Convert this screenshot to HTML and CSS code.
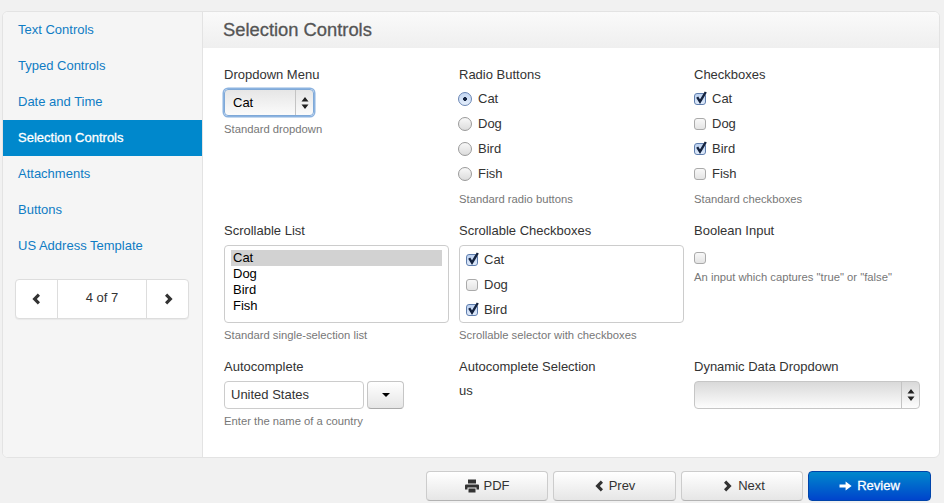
FILE: index.html
```html
<!DOCTYPE html>
<html lang="en">
<head>
    <meta charset="UTF-8">
    <title>Selection Controls</title>
    <link rel="stylesheet" href="styles.css">
</head>
<body>
    <svg class="defs" width="0" height="0">
        <symbol id="tick" viewBox="0 0 14 14">
            <path d="M3.2 6.2 L6 10.6 L11.8 1" fill="none" stroke="#14233f" stroke-width="2.4"/>
        </symbol>
        <symbol id="updown" viewBox="0 0 8 14">
            <path d="M4 1 L7.5 5.6 H0.5 Z M4 13 L0.5 8.4 H7.5 Z" fill="#222"/>
        </symbol>
        <symbol id="left" viewBox="0 0 10 12">
            <path d="M6.8 0.6 L9 2.8 L5.8 6 L9 9.2 L6.8 11.4 L1.4 6 Z" fill="#333"/>
        </symbol>
        <symbol id="right" viewBox="0 0 10 12">
            <path d="M3.2 0.6 L1 2.8 L4.2 6 L1 9.2 L3.2 11.4 L8.6 6 Z" fill="#333"/>
        </symbol>
    </svg>

    <div class="panel">
        <ul class="sidenav">
            <li><a href="#">Text Controls</a></li>
            <li><a href="#">Typed Controls</a></li>
            <li><a href="#">Date and Time</a></li>
            <li class="active"><a href="#">Selection Controls</a></li>
            <li><a href="#">Attachments</a></li>
            <li><a href="#">Buttons</a></li>
            <li><a href="#">US Address Template</a></li>
            <li class="pager-row">
                <div class="pager">
                    <a href="#" class="pager-arrow arrow-prev"><svg width="10" height="12"><use href="#left"/></svg></a>
                    <span class="pager-count">4 of 7</span>
                    <a href="#" class="pager-arrow arrow-next"><svg width="10" height="12"><use href="#right"/></svg></a>
                </div>
            </li>
        </ul>

        <div class="main">
            <h2 class="main-title">Selection Controls</h2>
            <div class="fields">

                <div class="field">
                    <div class="field-label">Dropdown Menu</div>
                    <div class="select select-focus">
                        <span class="select-value">Cat</span>
                        <span class="select-btn"><svg width="8" height="14"><use href="#updown"/></svg></span>
                    </div>
                    <div class="help">Standard dropdown</div>
                </div>

                <div class="field">
                    <div class="field-label">Radio Buttons</div>
                    <div class="opt"><span class="radio on"></span>Cat</div>
                    <div class="opt"><span class="radio"></span>Dog</div>
                    <div class="opt"><span class="radio"></span>Bird</div>
                    <div class="opt"><span class="radio"></span>Fish</div>
                    <div class="help help-opts">Standard radio buttons</div>
                </div>

                <div class="field">
                    <div class="field-label">Checkboxes</div>
                    <div class="opt"><span class="check on"><svg width="14" height="14"><use href="#tick"/></svg></span>Cat</div>
                    <div class="opt"><span class="check"></span>Dog</div>
                    <div class="opt"><span class="check on"><svg width="14" height="14"><use href="#tick"/></svg></span>Bird</div>
                    <div class="opt"><span class="check"></span>Fish</div>
                    <div class="help help-opts">Standard checkboxes</div>
                </div>

                <div class="field">
                    <div class="field-label">Scrollable List</div>
                    <div class="listbox">
                        <div class="list-item selected">Cat</div>
                        <div class="list-item">Dog</div>
                        <div class="list-item">Bird</div>
                        <div class="list-item">Fish</div>
                    </div>
                    <div class="help">Standard single-selection list</div>
                </div>

                <div class="field">
                    <div class="field-label">Scrollable Checkboxes</div>
                    <div class="listbox listbox-checks">
                        <div class="opt"><span class="check on"><svg width="14" height="14"><use href="#tick"/></svg></span>Cat</div>
                        <div class="opt"><span class="check"></span>Dog</div>
                        <div class="opt"><span class="check on"><svg width="14" height="14"><use href="#tick"/></svg></span>Bird</div>
                    </div>
                    <div class="help">Scrollable selector with checkboxes</div>
                </div>

                <div class="field">
                    <div class="field-label">Boolean Input</div>
                    <div class="bool"><span class="check"></span></div>
                    <div class="help help-bool">An input which captures "true" or "false"</div>
                </div>

                <div class="field">
                    <div class="field-label">Autocomplete</div>
                    <div class="combo">
                        <div class="text-input">United States</div>
                        <div class="combo-btn"><span class="caret"></span></div>
                    </div>
                    <div class="help">Enter the name of a country</div>
                </div>

                <div class="field">
                    <div class="field-label">Autocomplete Selection</div>
                    <div class="static-value">us</div>
                </div>

                <div class="field">
                    <div class="field-label">Dynamic Data Dropdown</div>
                    <div class="select select-wide">
                        <span class="select-value"></span>
                        <span class="select-btn"><svg width="8" height="14"><use href="#updown"/></svg></span>
                    </div>
                </div>

            </div>
        </div>
    </div>

    <div class="actions">
        <a href="#" class="btn">
            <svg width="14" height="14" viewBox="0 0 14 14"><path d="M3 0.5 H11 V4.5 H3 Z M1 5.5 H13 Q14 5.5 14 6.5 V10.5 H11.5 V8.5 H2.5 V10.5 H0 V6.5 Q0 5.5 1 5.5 Z M3.5 9.5 H10.5 V13.5 H3.5 Z" fill="#333"/></svg>
            PDF
        </a>
        <a href="#" class="btn btn-wide"><svg width="10" height="12"><use href="#left"/></svg> Prev</a>
        <a href="#" class="btn btn-next"><svg width="10" height="12"><use href="#right"/></svg> Next</a>
        <a href="#" class="btn btn-wide btn-primary">
            <svg width="13" height="12" viewBox="0 0 13 12"><path d="M0.5 4.6 H6.6 V1.6 L12.6 6 L6.6 10.4 V7.4 H0.5 Z" fill="#fff"/></svg>
            Review
        </a>
    </div>
</body>
</html>
```

FILE: styles.css
```css
* {
    box-sizing: border-box;
}
html, body {
    height: 100%;
}
body {
    margin: 0;
    padding: 11px 4px 0 2px;
    background-color: #f1f1f1;
    font-family: "Liberation Sans", Arial, sans-serif;
    font-size: 13px;
    line-height: 20px;
    color: #333;
    overflow: hidden;
}
a {
    text-decoration: none;
}
.defs {
    position: absolute;
}

/* outer panel */
.panel {
    display: flex;
    height: 447px;
    background-color: #fff;
    border: 1px solid #e3e3e3;
    border-radius: 6px;
    overflow: hidden;
}

/* left nav */
.sidenav {
    width: 200px;
    flex: none;
    margin: 0;
    padding: 0;
    list-style: none;
    background-color: #f5f5f5;
    border-right: 1px solid #e3e3e3;
}
.sidenav li a {
    display: block;
    height: 36px;
    padding: 8px 15px 6px;
    color: #0f7cc4;
}
.sidenav li.active a {
    background-color: #0088cc;
    color: #fff;
    -webkit-text-stroke: 0.3px #fff;
}
.sidenav li.pager-row {
    padding: 15px 12px 0;
}
.pager {
    display: flex;
    width: 174px;
    height: 40px;
    background-color: #fff;
    border: 1px solid #ddd;
    border-radius: 4px;
    box-shadow: 0 1px 1px rgba(0, 0, 0, 0.05);
}
.sidenav li .pager-arrow {
    display: flex;
    align-items: center;
    justify-content: center;
    width: 41px;
    height: 38px;
    margin: 0;
    padding: 0;
}
.sidenav li .arrow-prev {
    padding-right: 2px;
}
.sidenav li .arrow-next {
    padding-left: 2px;
}
.pager-count {
    flex: 1;
    text-align: center;
    line-height: 36px;
    border-left: 1px solid #ddd;
    border-right: 1px solid #ddd;
}

/* main area */
.main {
    flex: 1;
}
.main-title {
    margin: 0;
    height: 36px;
    padding: 0 20px;
    font-size: 18.35px;
    font-weight: normal;
    line-height: 35px;
    color: #555;
    -webkit-text-stroke: 0.3px #555;
    background: linear-gradient(to bottom, #fafafa, #efefef);
}
.fields {
    display: grid;
    grid-template-columns: repeat(3, 225px);
    grid-template-rows: 156px 136px auto;
    column-gap: 10px;
    padding: 16px 0 0 21px;
}
.field-label {
    height: 20px;
    line-height: 22px;
    color: #333;
}
.help {
    margin-top: 4px;
    font-size: 11.25px;
    line-height: 16px;
    color: #777;
}
.help-opts {
    margin-top: 5px;
}
.help-bool {
    margin-top: 5px;
}

/* selects */
.select {
    display: flex;
    width: 90px;
    height: 27px;
    margin-top: 5px;
    border: 1px solid #bbb;
    border-radius: 4px;
    background: linear-gradient(to bottom, #e6e6e6, #fbfbfb);
    color: #000;
}
.select-focus {
    margin-bottom: 5px;
    border-color: #7fa9d8;
    box-shadow: 0 0 0 1.5px #8cb3e0;
}
.select-value {
    flex: 1;
    padding-left: 8px;
    line-height: 25px;
}
.select-btn {
    display: flex;
    align-items: center;
    justify-content: center;
    width: 18px;
    border-left: 1px solid #c4c4c4;
}
.select-wide {
    width: 226px;
    height: 28px;
    margin-top: 5px;
    border-color: #c6c6c6;
    background: linear-gradient(to bottom, #d9d9d9, #fdfdfd);
}

/* radios and checkboxes */
.opt {
    display: flex;
    align-items: center;
    height: 25px;
    color: #333;
}
.field-label + .opt {
    margin-top: 2px;
}
.radio {
    width: 14px;
    height: 14px;
    margin: 0 6px 0 -1px;
    border: 1px solid #9a9a9a;
    border-radius: 50%;
    background: linear-gradient(to bottom, #f8f8f8, #dcdcdc);
}
.radio.on {
    border-color: #6a86b4;
    background: radial-gradient(circle, #14233f 0, #14233f 1.6px, transparent 2.2px), linear-gradient(to bottom, #c3d6f2, #e4eefb);
}
.check {
    position: relative;
    display: inline-block;
    width: 12px;
    height: 12px;
    margin-right: 6px;
    border: 1px solid #aaa;
    border-radius: 3px;
    background: linear-gradient(to bottom, #f8f8f8, #e4e4e4);
}
.check.on {
    border-color: #5f7eae;
    background: linear-gradient(to bottom, #bcd1f0, #dfeafa);
}
.check svg {
    position: absolute;
    left: -1px;
    top: -3px;
}

/* list boxes */
.listbox {
    width: 225px;
    height: 78px;
    margin-top: 5px;
    padding: 4px 6px;
    background-color: #fff;
    border: 1px solid #ccc;
    border-radius: 4px;
    overflow: hidden;
}
.list-item {
    height: 16px;
    line-height: 16px;
    padding-left: 2px;
    color: #000;
}
.list-item.selected {
    background-color: #d2d2d2;
}
.listbox-checks {
    padding: 1px 6px 0;
}
.bool {
    display: flex;
    align-items: center;
    height: 24px;
    padding-top: 11px;
}

/* autocomplete */
.combo {
    display: flex;
    gap: 3px;
    margin-top: 5px;
}
.text-input {
    width: 140px;
    height: 28px;
    padding: 0 6px;
    line-height: 26px;
    color: #333;
    background-color: #fff;
    border: 1px solid #ccc;
    border-radius: 4px;
}
.combo-btn {
    display: flex;
    align-items: center;
    justify-content: center;
    width: 37px;
    height: 28px;
    background: linear-gradient(to bottom, #fff, #e6e6e6);
    border: 1px solid #c6c6c6;
    border-bottom-color: #aaa;
    border-radius: 4px;
}
.caret {
    border-top: 4px solid #000;
    border-left: 4px solid transparent;
    border-right: 4px solid transparent;
}
.static-value {
    margin-top: 5px;
    line-height: 20px;
}

/* bottom buttons */
.actions {
    display: flex;
    justify-content: flex-end;
    gap: 5px;
    margin-top: 13px;
    padding-right: 9px;
}
.btn {
    display: flex;
    align-items: center;
    justify-content: center;
    gap: 5px;
    width: 122px;
    height: 30px;
    padding-bottom: 1px;
    color: #333;
    background: linear-gradient(to bottom, #fff, #e6e6e6);
    border: 1px solid #ccc;
    border-bottom-color: #b3b3b3;
    border-radius: 4px;
}
.btn-wide {
    width: 123px;
}
.btn-next {
    padding-left: 4px;
}
.btn-primary {
    color: #fff;
    -webkit-text-stroke: 0.3px #fff;
    background: linear-gradient(to bottom, #0088cc, #0044cc);
    border-color: #0044aa;
}
```
